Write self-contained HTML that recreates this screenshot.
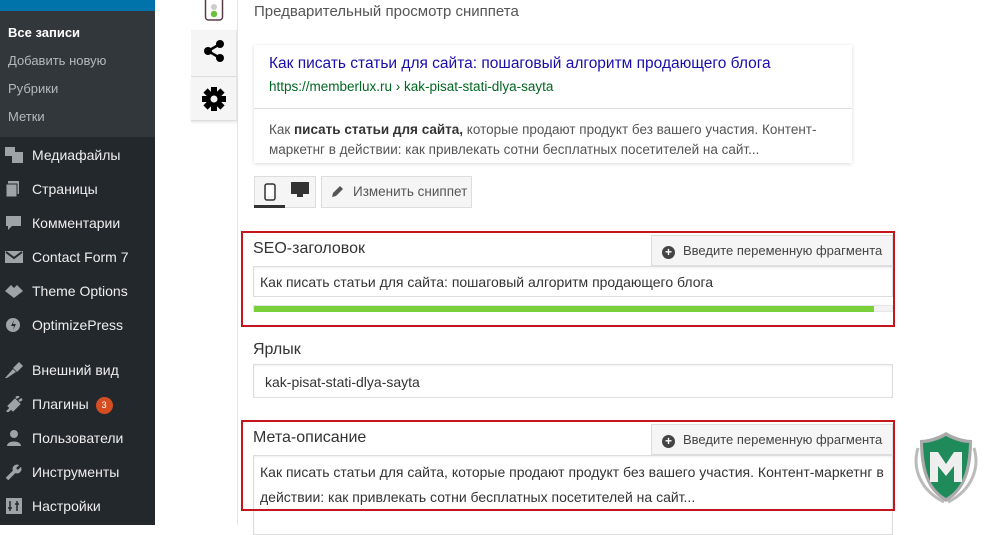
<!DOCTYPE html>
<html><head><meta charset="utf-8"><style>
*{margin:0;padding:0;box-sizing:border-box}
body{width:1000px;height:525px;overflow:hidden;background:#fff;font-family:"Liberation Sans",Arial,sans-serif;position:relative}
.a{position:absolute;white-space:nowrap}
#sb{position:absolute;left:0;top:0;width:155px;height:525px;background:#23282d}
#sub{position:absolute;left:0;top:11px;width:155px;height:126px;background:#32373c}
.si{position:absolute;left:8px;font-size:13px;color:#b4b9be}
.mi{position:absolute;left:32px;font-size:14px;color:#eee}
.ic{position:absolute;left:5px;width:18px;height:16px}
.tab{position:absolute;left:191px;width:46px;background:#f5f5f5;border-bottom:1px solid #ddd;border-right:1px solid #e5e5e5}
.box{position:absolute;left:241px;width:654px;border:2px solid #c4161c}
.inp{position:absolute;border:1px solid #ddd;box-shadow:inset 0 1px 2px rgba(0,0,0,.07);background:#fff;font-size:14px;color:#333}
.vb{position:absolute;left:651px;width:242px;height:31px;background:#f5f5f5;border:1px solid #ddd;font-size:13px;color:#444;padding:7px 0 0 10px;white-space:nowrap}
.vb b{display:inline-block;width:13px;height:13px;border-radius:50%;background:#444;color:#fff;font-size:12px;line-height:13px;text-align:center;margin-right:8px;vertical-align:-1px}
</style></head><body>
<div id="sb">
<div style="position:absolute;left:0;top:0;width:155px;height:11px;background:#0073aa"></div>
<div id="sub"></div>
<div class="si" style="top:25px;color:#fff;font-weight:bold">Все записи</div>
<div class="si" style="top:53px">Добавить новую</div>
<div class="si" style="top:81px">Рубрики</div>
<div class="si" style="top:109px">Метки</div>
<svg class="ic" style="top:147px" viewBox="0 0 18 16"><rect x="0" y="0" width="10" height="9" fill="#9ea3a8"/><rect x="7" y="5" width="11" height="11" fill="#9ea3a8"/></svg>
<div class="mi" style="top:147px">Медиафайлы</div>
<svg class="ic" style="top:181px" viewBox="0 0 18 16"><rect x="3" y="0" width="11" height="13" fill="#9ea3a8"/><rect x="1" y="3" width="11" height="13" fill="#9ea3a8" stroke="#23282d"/></svg>
<div class="mi" style="top:181px">Страницы</div>
<svg class="ic" style="top:215px" viewBox="0 0 18 16"><path d="M1 1h15v10H7l-4 4v-4H1z" fill="#9ea3a8"/></svg>
<div class="mi" style="top:215px">Комментарии</div>
<svg class="ic" style="top:249px" viewBox="0 0 18 16"><rect x="0" y="2" width="18" height="12" fill="#9ea3a8"/><path d="M1 3l8 6 8-6" stroke="#23282d" stroke-width="2" fill="none"/></svg>
<div class="mi" style="top:249px">Contact Form 7</div>
<svg class="ic" style="top:283px" viewBox="0 0 18 16"><path d="M0 8l6-6 3 3 3-3 6 6-9 7z" fill="#9ea3a8"/></svg>
<div class="mi" style="top:283px">Theme Options</div>
<svg class="ic" style="top:317px" viewBox="0 0 18 16"><circle cx="8" cy="8" r="7" fill="#9ea3a8"/><path d="M9 3l-3 6h3l-1 4 3-6H8z" fill="#23282d"/></svg>
<div class="mi" style="top:317px">OptimizePress</div>
<svg class="ic" style="top:362px" viewBox="0 0 18 16"><path d="M0 16l8-9 3 3-9 6zM8 6l6-6 4 4-6 6z" fill="#9ea3a8"/></svg>
<div class="mi" style="top:362px">Внешний вид</div>
<svg class="ic" style="top:396px" viewBox="0 0 18 16"><path d="M2 16l4-4-2-2 6-6 4 4-6 6-2-2z M11 2l3-2 M14 5l3-2" stroke="#9ea3a8" stroke-width="2.5" fill="#9ea3a8"/></svg>
<div class="mi" style="top:396px">Плагины <span style="display:inline-block;width:17px;height:17px;border-radius:50%;background:#d54e21;color:#fff;font-size:9px;text-align:center;line-height:17px;vertical-align:1px;margin-left:3px">3</span></div>
<svg class="ic" style="top:430px" viewBox="0 0 18 16"><circle cx="9" cy="4" r="4" fill="#9ea3a8"/><path d="M2 16c0-6 14-6 14 0z" fill="#9ea3a8"/></svg>
<div class="mi" style="top:430px">Пользователи</div>
<svg class="ic" style="top:464px" viewBox="0 0 18 16"><path d="M2 15l8-8" stroke="#9ea3a8" stroke-width="3.5"/><circle cx="12" cy="5" r="4.5" fill="#9ea3a8"/><path d="M12 5l4-4" stroke="#23282d" stroke-width="2.5"/></svg>
<div class="mi" style="top:464px">Инструменты</div>
<svg class="ic" style="top:498px" viewBox="0 0 18 16"><rect x="1" y="0" width="16" height="16" fill="#9ea3a8"/><path d="M5 3v10M12 3v10M3 10h4M10 6h4" stroke="#23282d" stroke-width="1.5"/></svg>
<div class="mi" style="top:498px">Настройки</div>
</div>
<div style="position:absolute;left:237px;top:0;width:1px;height:525px;background:#e5e5e5"></div>
<div class="tab" style="top:0;height:30px;background:#fff;border-right:none;border-bottom:none"></div>
<svg class="a" style="left:204px;top:0" width="20" height="22" viewBox="0 0 20 22"><rect x="1.5" y="-3" width="17" height="23" rx="3" fill="#fff" stroke="#5b3b4a" stroke-width="1.5"/><circle cx="10" cy="7" r="3" fill="#ccc"/><circle cx="10" cy="14" r="3.2" fill="#6fbf3d"/></svg>
<div class="tab" style="top:30px;height:47px"></div>
<svg class="a" style="left:202px;top:39px" width="24" height="24" viewBox="0 0 24 24"><path d="M18 5L6 12l12 7" stroke="#000" stroke-width="2.5" fill="none"/><circle cx="18" cy="5" r="4" fill="#000"/><circle cx="6" cy="12" r="4" fill="#000"/><circle cx="18" cy="19" r="4" fill="#000"/></svg>
<div class="tab" style="top:77px;height:44px;box-shadow:0 2px 2px rgba(0,0,0,.08)"></div>
<svg class="a" style="left:201px;top:86px" width="26" height="26" viewBox="0 0 26 26"><g fill="#000"><circle cx="13" cy="13" r="8"/><rect x="10" y="1" width="6" height="24"/><rect x="1" y="10" width="24" height="6"/><rect x="10" y="1" width="6" height="24" transform="rotate(45 13 13)"/><rect x="10" y="1" width="6" height="24" transform="rotate(-45 13 13)"/></g><circle cx="13" cy="13" r="3.5" fill="#f5f5f5"/></svg>
<div class="a" style="left:254px;top:3px;font-size:15px;color:#555">Предварительный просмотр сниппета</div>
<div class="a" style="left:254px;top:45px;width:598px;height:118px;background:#fff;box-shadow:0 1px 4px rgba(0,0,0,.15)">
<div class="a" style="left:15px;top:10px;font-size:15.5px;color:#1a0dab">Как писать статьи для сайта: пошаговый алгоритм продающего блога</div>
<div class="a" style="left:15px;top:34px;font-size:13.5px;color:#006621">https://memberlux.ru › kak-pisat-stati-dlya-sayta</div>
<div class="a" style="left:0;top:63px;width:598px;height:1px;background:#ddd"></div>
<div class="a" style="left:15px;top:75px;font-size:13.5px;color:#545454;line-height:20px">Как <b style="color:#333">писать статьи для сайта,</b> которые продают продукт без вашего участия. Контент-<br>маркетнг в действии: как привлекать сотни бесплатных посетителей на сайт...</div>
</div>
<div class="a" style="left:254px;top:176px;width:62px;height:32px;background:#f5f5f5;border:1px solid #ddd"></div>
<div class="a" style="left:254px;top:205px;width:31px;height:3px;background:#333"></div>
<svg class="a" style="left:264px;top:183px" width="12" height="18" viewBox="0 0 12 18"><rect x="1" y="1" width="10" height="16" rx="2" fill="none" stroke="#333" stroke-width="1.5"/><rect x="2.5" y="3" width="7" height="10" fill="#fff"/></svg>
<svg class="a" style="left:291px;top:182px" width="18" height="16" viewBox="0 0 18 16"><rect x="0" y="0" width="18" height="12" fill="#333"/><rect x="6" y="12" width="6" height="3" fill="#333"/></svg>
<div class="a" style="left:321px;top:176px;width:151px;height:32px;background:#f5f5f5;border:1px solid #ddd;font-size:13.5px;color:#555;padding:7px 0 0 31px">Изменить сниппет</div>
<svg class="a" style="left:331px;top:184px" width="14" height="14" viewBox="0 0 14 14"><path d="M1 13l1-4 7-7 3 3-7 7z" fill="#555"/></svg>
<div class="box" style="top:231px;height:96px"></div>
<div class="a" style="left:253px;top:240px;font-size:16px;color:#333">SEO-заголовок</div>
<div class="vb" style="top:235px"><b>+</b>Введите переменную фрагмента</div>
<div class="inp" style="left:253px;top:266px;width:640px;height:31px;padding:7px 0 0 6px">Как писать статьи для сайта: пошаговый алгоритм продающего блога</div>
<div class="a" style="left:253px;top:305px;width:640px;height:7px;background:#f3f3f3;border:1px solid #e6e6e6"></div>
<div class="a" style="left:254px;top:306px;width:620px;height:6px;background:#7ad03a"></div>
<div class="a" style="left:253px;top:341px;font-size:16px;color:#333">Ярлык</div>
<div class="inp" style="left:253px;top:364px;width:640px;height:34px;padding:9px 0 0 11px">kak-pisat-stati-dlya-sayta</div>
<div class="box" style="top:420px;height:91px"></div>
<div class="a" style="left:253px;top:429px;font-size:16px;color:#333">Мета-описание</div>
<div class="vb" style="top:424px"><b>+</b>Введите переменную фрагмента</div>
<div class="inp" style="left:253px;top:455px;width:640px;height:80px;padding:4px 0 0 6px;line-height:25px;font-size:14px;white-space:nowrap">Как писать статьи для сайта, которые продают продукт без вашего участия. Контент-маркетнг в<br>действии: как привлекать сотни бесплатных посетителей на сайт...</div>
<div class="box" style="top:420px;height:91px;background:transparent"></div>
<svg class="a" style="left:910px;top:428px" width="72" height="80" viewBox="0 0 72 80"><g stroke="#bbb" stroke-width="3" fill="none"><path d="M8 20C2 40 10 62 34 74"/><path d="M64 20C70 40 62 62 38 74"/></g><path d="M36 4C26 10 16 12 10 12c0 30 6 50 26 62 20-12 26-32 26-62-6 0-16-2-26-8z" fill="#aaa"/><path d="M36 8C27 13 18 15 13 15c1 27 6 45 23 55 17-10 22-28 23-55-5 0-14-2-23-7z" fill="#1f8a5a"/><path d="M20 24h8l8 12 8-12h8v30h-8V38l-8 10-8-10v16h-8z" fill="#eee"/></svg>
</body></html>
